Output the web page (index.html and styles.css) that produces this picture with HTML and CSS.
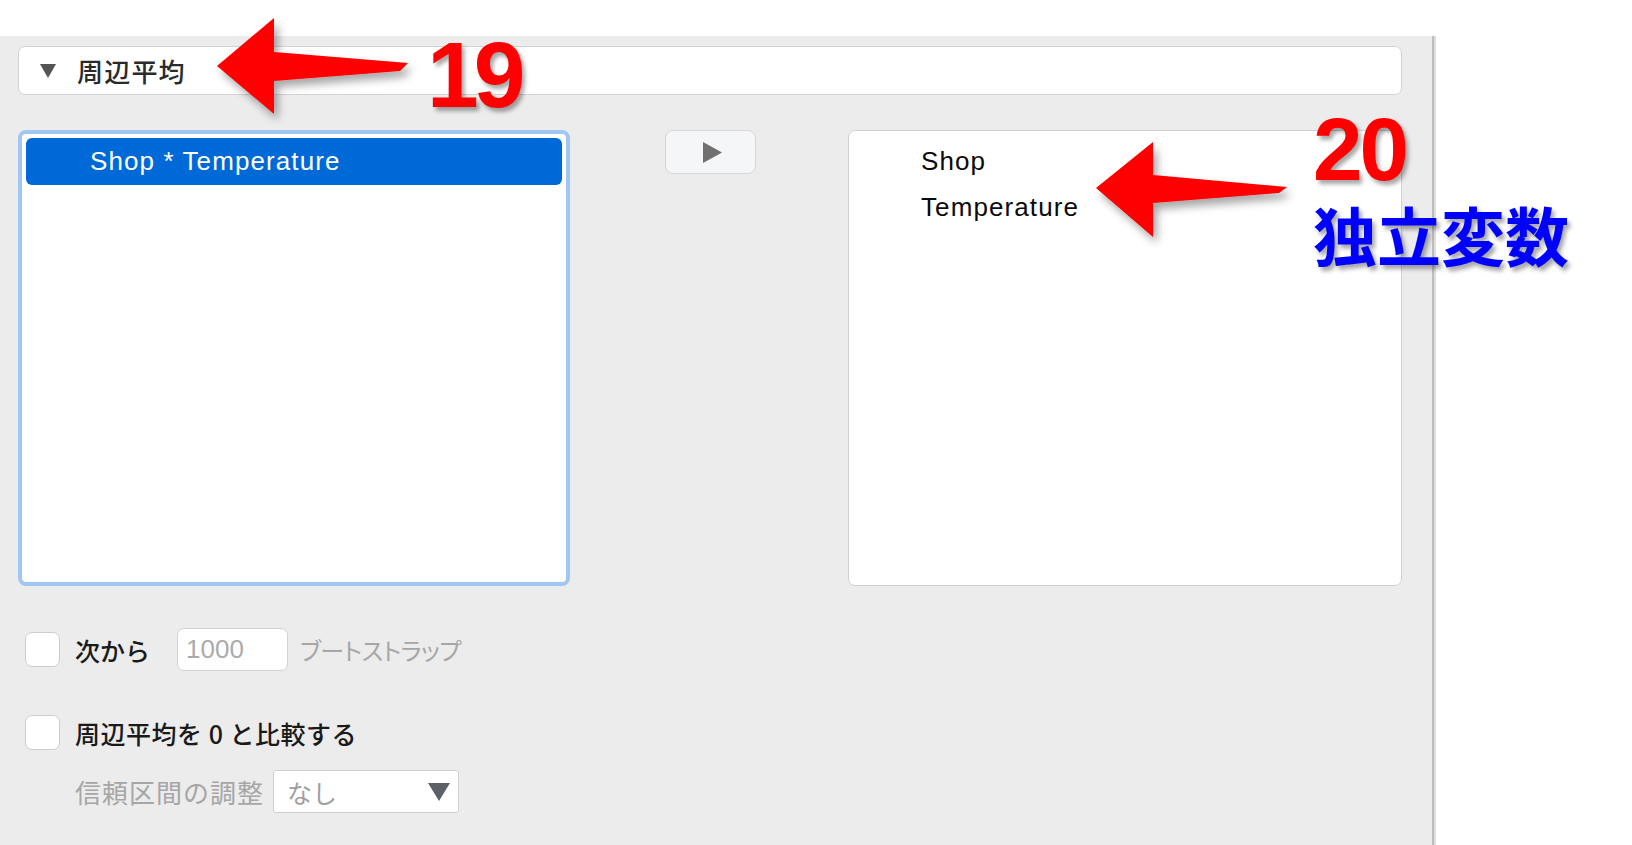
FILE: index.html
```html
<!DOCTYPE html>
<html lang="ja">
<head>
<meta charset="utf-8">
<title>周辺平均</title>
<link rel="stylesheet" href="styles.css">
</head>
<body>
<div class="page">
  <div class="panel">
    <div class="section-header">
      <svg class="disclosure" width="16" height="14" viewBox="0 0 16 14"><polygon points="0,0 16,0 8,14" fill="#555"/></svg>
      <span class="section-title">周辺平均</span>
    </div>

    <div class="lists">
      <div class="list list-focused">
        <div class="list-row selected">Shop * Temperature</div>
      </div>
      <div class="move-col">
        <button class="move-btn" type="button">
          <svg width="19" height="21" viewBox="0 0 19 21"><polygon points="0,0 19,10.5 0,21" fill="#707070"/></svg>
        </button>
      </div>
      <div class="list list-plain">
        <div class="list-row">Shop</div>
        <div class="list-row">Temperature</div>
      </div>
    </div>

    <div class="options">
      <div class="opt-row">
        <span class="checkbox"></span>
        <span class="label">次から</span>
        <span class="num-input">1000</span>
        <span class="label muted palt">ブートストラップ</span>
      </div>
      <div class="opt-row row-compare">
        <span class="checkbox"></span>
        <span class="label spaced">周辺平均を 0 と比較する</span>
      </div>
      <div class="opt-row row-adjust">
        <span class="label muted wide">信頼区間の調整</span>
        <span class="select">
          <span class="select-value">なし</span>
          <svg class="select-arrow" width="22" height="18" viewBox="0 0 22 18"><polygon points="0,0 22,0 11,18" fill="#5b6166"/></svg>
        </span>
      </div>
    </div>
  </div>
</div>

<svg class="arrows" width="1632" height="845" viewBox="0 0 1632 845">
  <defs>
    <filter id="sh" x="-20%" y="-30%" width="150%" height="180%">
      <feDropShadow dx="4" dy="6" stdDeviation="4" flood-color="#000" flood-opacity="0.35"/>
    </filter>
  </defs>
  <polygon filter="url(#sh)" fill="#ff0000" points="217,66 274,18 274,52 408,63 400,71 274,81 274,114"/>
  <polygon filter="url(#sh)" fill="#ff0000" points="1096,188 1153,142 1153,175 1287,187 1279,193 1153,203 1153,237"/>
</svg>
<div class="note num19">19</div>
<div class="note num20">20</div>
<div class="note caption">独立変数</div>
</body>
</html>
```

FILE: styles.css
```css
html, body {
  margin: 0;
  padding: 0;
}
body {
  width: 1632px;
  height: 845px;
  background: #ffffff;
  position: relative;
  overflow: hidden;
  font-family: "Liberation Sans", "Noto Sans CJK JP", sans-serif;
}
.page {
  padding-top: 36px;
}
.panel {
  box-sizing: border-box;
  width: 1434px;
  height: 809px;
  background: #ececec;
  border-right: 2px solid #bebebe;
  box-shadow: 2px 0 0 #dedede;
  padding: 10px 30px 0 18px;
}
.section-header {
  box-sizing: border-box;
  height: 49px;
  background: #ffffff;
  border: 1px solid #d3d3d3;
  border-radius: 7px;
  display: flex;
  align-items: center;
  padding-left: 21px;
}
.disclosure {
  display: block;
  margin-right: 21px;
}
.section-title {
  font-family: "Noto Sans CJK JP", sans-serif;
  font-size: 26px;
  font-weight: 500;
  letter-spacing: 1.2px;
  line-height: 30px;
  color: #2a2a2a;
}
.lists {
  margin-top: 35px;
  display: grid;
  grid-template-columns: 552px 1fr 554px;
  height: 456px;
}
.list {
  box-sizing: border-box;
  background: #ffffff;
  font-family: "Liberation Sans", sans-serif;
  font-size: 26px;
  letter-spacing: 1.1px;
}
.list-focused {
  border: 4px solid #9fc7f2;
  border-radius: 8px;
  padding: 4px;
}
.list-plain {
  border: 1px solid #d0d0d0;
  border-radius: 7px;
  padding: 7px 0 0 72px;
}
.list-row {
  height: 46px;
  line-height: 46px;
  color: #0a0a0a;
}
.list-row.selected {
  height: 47px;
  line-height: 47px;
  background: #0069d8;
  color: #ffffff;
  border-radius: 6px;
  padding-left: 64px;
}
.move-col {
  display: flex;
  justify-content: center;
  align-items: flex-start;
}
.move-btn {
  box-sizing: border-box;
  width: 91px;
  height: 44px;
  margin: 0 0 0 2px;
  padding: 0;
  background: #f5f6f8;
  border: 1px solid #d6d6d6;
  border-radius: 8px;
  display: flex;
  align-items: center;
  justify-content: center;
}
.move-btn svg {
  display: block;
  margin-left: 4px;
}
.options {
  margin-top: 42px;
  padding-left: 7px;
}
.opt-row {
  display: flex;
  align-items: center;
  height: 43px;
}
.row-compare {
  margin-top: 40px;
}
.row-adjust {
  margin-top: 16px;
  padding-left: 50px;
}
.checkbox {
  box-sizing: border-box;
  width: 35px;
  height: 35px;
  background: #ffffff;
  border: 1px solid #cdcdcd;
  border-radius: 7px;
  margin-right: 15px;
  flex: none;
}
.label {
  font-family: "Noto Sans CJK JP", sans-serif;
  font-size: 25px;
  font-weight: 500;
  line-height: 30px;
  color: #1a1a1a;
  white-space: pre;
}
.label.spaced {
  letter-spacing: 0.5px;
}
.label.muted {
  color: #a6a6a6;
  font-weight: 400;
}
.label.palt {
  font-feature-settings: "palt";
  font-size: 24px;
  letter-spacing: -0.5px;
}
.label.wide {
  font-size: 26px;
  letter-spacing: 1px;
}
.num-input {
  box-sizing: border-box;
  width: 111px;
  height: 43px;
  margin: 0 12px 0 27px;
  background: #ffffff;
  border: 1px solid #d2d2d2;
  border-radius: 7px;
  padding-left: 8px;
  font-family: "Liberation Sans", sans-serif;
  font-size: 26px;
  line-height: 41px;
  color: #ababab;
}
.select {
  box-sizing: border-box;
  width: 186px;
  height: 43px;
  margin-left: 9px;
  background: #ffffff;
  border: 1px solid #cfcfcf;
  border-radius: 3px;
  display: flex;
  align-items: center;
  justify-content: space-between;
  padding: 0 8px 0 13px;
}
.select-value {
  font-family: "Noto Sans CJK JP", sans-serif;
  font-size: 25px;
  line-height: 30px;
  color: #a0a0a0;
}
.select-arrow {
  display: block;
}
.arrows {
  position: absolute;
  left: 0;
  top: 0;
  pointer-events: none;
}
.note {
  position: absolute;
  font-weight: bold;
  white-space: nowrap;
  text-shadow: 3px 4px 4px rgba(0, 0, 0, 0.35);
}
.num19 {
  left: 427px;
  top: 38px;
  font-family: "Liberation Sans", sans-serif;
  font-size: 93px;
  line-height: 0.8;
  letter-spacing: -5px;
  color: #ff0000;
}
.num20 {
  left: 1313px;
  top: 114px;
  font-family: "Liberation Sans", sans-serif;
  font-size: 89px;
  line-height: 0.8;
  letter-spacing: -3px;
  color: #ff0000;
}
.caption {
  left: 1313px;
  top: 201px;
  font-family: "Noto Sans CJK JP", sans-serif;
  font-size: 64px;
  line-height: 1;
  color: #0000ff;
}
```
